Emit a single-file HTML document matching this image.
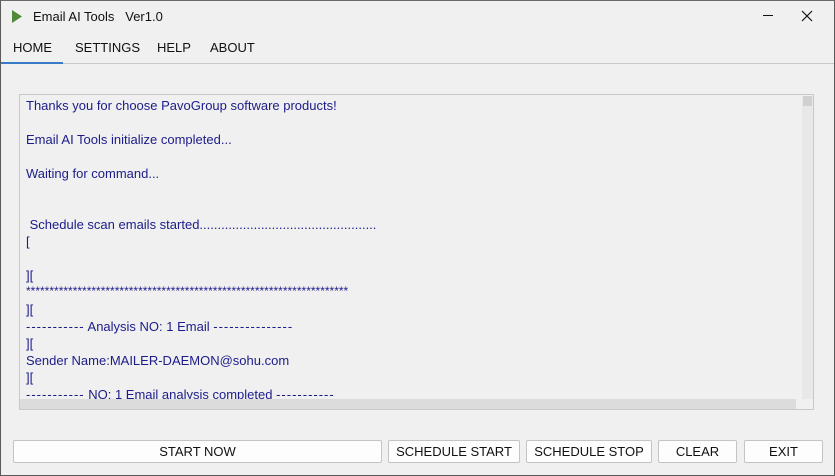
<!DOCTYPE html>
<html><head><meta charset="utf-8"><style>
*{margin:0;padding:0;box-sizing:border-box}
body{width:835px;height:476px;background:#f0f0f0;font-family:"Liberation Sans",sans-serif;position:relative;overflow:hidden}
.win{position:absolute;left:0;top:0;width:835px;height:476px;border:1px solid #5a5a5a;border-top-color:#6a6a6a}
.t{position:absolute;white-space:nowrap}
.tab{position:absolute;top:40px;font-size:13px;color:#111}
.log{position:absolute;left:19px;top:94px;width:795px;height:316px;border:1px solid #c8c8c8;background:#f0f0f0;overflow:hidden}
.l{position:absolute;left:6px;font-size:13px;color:#1c1c8a;white-space:nowrap}
.btn{position:absolute;top:440px;height:23px;background:#fdfdfd;border:1px solid #c4c4c4;border-radius:2px;font-size:13px;color:#111;text-align:center;line-height:21px}
</style></head><body>
<div class="win"></div>
<svg class="t" style="left:12px;top:10px" width="10" height="13"><polygon points="0,0 10,6.5 0,13" fill="#4f8a3a"/></svg>
<div class="t" style="left:33px;top:9px;font-size:13px;color:#111">Email AI Tools&nbsp;&nbsp; Ver1.0</div>
<div class="t" style="left:763px;top:15px;width:10px;height:1px;background:#111"></div>
<svg class="t" style="left:801px;top:10px" width="12" height="12"><path d="M1 1L11 11M11 1L1 11" stroke="#111" stroke-width="1.2"/></svg>
<div class="tab" style="left:13px">HOME</div>
<div class="tab" style="left:75px">SETTINGS</div>
<div class="tab" style="left:157px">HELP</div>
<div class="tab" style="left:210px">ABOUT</div>
<div class="t" style="left:1px;top:62px;width:62px;height:2px;background:#3a7bc8"></div>
<div class="t" style="left:63px;top:63px;width:771px;height:1px;background:#c8c8c8"></div>
<div class="log">
<div class="l" style="top:3px">Thanks you for choose PavoGroup software products!</div>
<div class="l" style="top:37px">Email AI Tools initialize completed...</div>
<div class="l" style="top:71px">Waiting for command...</div>
<div class="l" style="top:122px">&nbsp;Schedule scan emails started.................................................</div>
<div class="l" style="top:139px">[</div>
<div class="l" style="top:173px">][</div>
<div class="l" style="top:189px;font-size:12px">*********************************************************************</div>
<div class="l" style="top:207px">][</div>
<div class="l" style="top:224px"><span style="letter-spacing:1px">-----------</span> Analysis NO: 1 Email <span style="letter-spacing:1px">---------------</span></div>
<div class="l" style="top:241px">][</div>
<div class="l" style="top:258px">Sender Name:MAILER-DAEMON@sohu.com</div>
<div class="l" style="top:275px">][</div>
<div class="l" style="top:292px"><span style="letter-spacing:1px">-----------</span> NO: 1 Email analysis completed <span style="letter-spacing:1px">-----------</span></div>
<div style="position:absolute;left:0;top:304px;width:776px;height:10px;background:#dcdcdc"></div>
<div style="position:absolute;left:782px;top:1px;width:11px;height:303px;background:#e8e8e8"></div>
<div style="position:absolute;left:783px;top:1px;width:9px;height:10px;background:#d0d0d0"></div>
</div>
<div class="btn" style="left:13px;width:369px">START NOW</div>
<div class="btn" style="left:388px;width:132px">SCHEDULE START</div>
<div class="btn" style="left:526px;width:126px">SCHEDULE STOP</div>
<div class="btn" style="left:658px;width:79px">CLEAR</div>
<div class="btn" style="left:744px;width:79px">EXIT</div>
</body></html>
